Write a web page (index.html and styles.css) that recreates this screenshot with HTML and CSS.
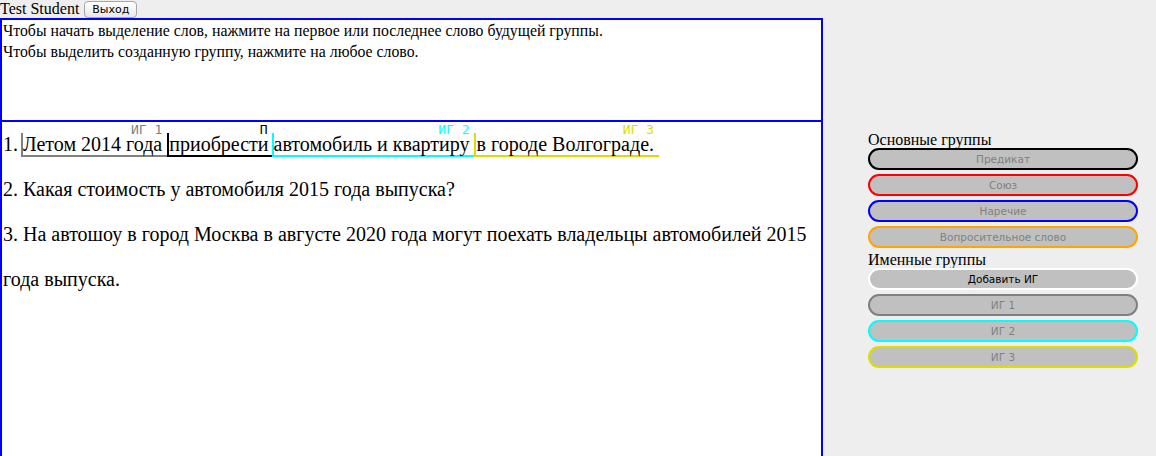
FILE: index.html
```html
<!DOCTYPE html>
<html lang="ru">
<head>
<meta charset="utf-8">
<title>Группы</title>
<link rel="stylesheet" href="styles.css">
</head>
<body>
<div class="header">Test Student <button class="logout">Выход</button></div>
<div class="layout">
  <div class="work">
    <div class="hint">
      <div>Чтобы начать выделение слов, нажмите на первое или последнее слово будущей группы.</div>
      <div>Чтобы выделить созданную группу, нажмите на любое слово.</div>
    </div>
    <div class="text">
      <p class="sent">1.<span class="lead"> </span><span class="grp g-ig1"><span class="lbl">ИГ 1</span>Летом 2014 года </span><span class="grp g-p"><span class="lbl">П</span>приобрести</span><span class="grp g-ig2"><span class="lbl">ИГ 2</span>автомобиль и квартиру </span><span class="grp g-ig3"><span class="lbl">ИГ 3</span>в городе Волгограде. </span></p>
      <p class="sent">2. Какая стоимость у автомобиля 2015 года выпуска?</p>
      <p class="sent">3. На автошоу в город Москва в августе 2020 года могут поехать владельцы автомобилей 2015 года выпуска.</p>
    </div>
  </div>
  <div class="panel">
    <div class="ptitle">Основные группы</div>
    <button class="pill c-black">Предикат</button>
    <button class="pill c-red">Союз</button>
    <button class="pill c-blue">Наречие</button>
    <button class="pill c-orange">Вопросительное слово</button>
    <div class="ptitle">Именные группы</div>
    <button class="pill c-white">Добавить ИГ</button>
    <button class="pill c-gray">ИГ 1</button>
    <button class="pill c-cyan">ИГ 2</button>
    <button class="pill c-yellow">ИГ 3</button>
  </div>
</div>
</body>
</html>
```
FILE: styles.css
```css
html, body {
  margin: 0;
  padding: 0;
  background: #eeeeee;
  font-family: "Liberation Serif", "Times New Roman", serif;
  color: #000;
}
.header {
  font-size: 16px;
  height: 18px;
  line-height: 18px;
}
.logout {
  font-family: "DejaVu Sans", "Liberation Sans", sans-serif;
  font-size: 11px;
  height: 17px;
  padding: 0 7px;
  margin: 1px 0 0 1px;
  vertical-align: top;
  border: 1px solid #a6a6a6;
  border-radius: 4px;
  background: linear-gradient(#ffffff, #e8e8e8);
  color: #000;
}
.layout {
  display: flex;
  align-items: flex-start;
}
.work {
  width: 823px;
  display: flex;
  flex-direction: column;
}
.hint {
  box-sizing: border-box;
  height: 104px;
  border: 2px solid #0000ff;
  background: #fff;
  font-size: 15.8px;
  line-height: 21px;
  padding: 0 0 0 1px;
}
.text {
  box-sizing: border-box;
  height: 400px;
  margin-top: -2px;
  border: 2px solid #0000ff;
  background: #fff;
  font-size: 20px;
  line-height: 45px;
  padding: 0 0 0 1px;
}
.sent {
  margin: 0;
}
.lead {
  display: inline-block;
  width: 3px;
}
.grp {
  position: relative;
  display: inline-block;
  line-height: 22px;
  border-left: 2px solid;
  border-bottom: 2px solid;
  white-space: pre;
}
.g-p {
  padding-right: 3px;
}
.lbl {
  position: absolute;
  right: 5px;
  top: -9px;
  font-family: "DejaVu Sans Mono", "Liberation Mono", monospace;
  font-size: 13px;
  line-height: 11px;
}
.g-p .lbl { right: 4px; }
.g-ig1 { border-color: #808080; }
.g-ig1 .lbl { color: #808080; }
.g-p { border-color: #000; }
.g-p .lbl { color: #000; }
.g-ig2 { border-color: #00ffff; }
.g-ig2 .lbl { color: #00ffff; }
.g-ig3 { border-color: #dddd00; }
.g-ig3 .lbl { color: #dddd00; }
.panel {
  margin-left: 45px;
  margin-top: 114px;
  width: 270px;
  display: flex;
  flex-direction: column;
}
.ptitle {
  font-size: 16px;
  line-height: 16px;
}
.pill {
  box-sizing: border-box;
  height: 22px;
  margin: 0 0 4px 0;
  border: 2px solid;
  border-radius: 11px;
  background: #c0c0c0;
  font-family: "DejaVu Sans", "Liberation Sans", sans-serif;
  font-size: 10.5px;
  color: #808080;
  padding: 0;
}
.c-black { border-color: #000; }
.c-red { border-color: #ff0000; }
.c-blue { border-color: #0000ff; }
.c-orange { border-color: #ffa500; }
.c-white { border-color: #ffffff; color: #000; }
.c-gray { border-color: #808080; }
.c-cyan { border-color: #00ffff; }
.c-yellow { border-color: #dddd00; }
```
